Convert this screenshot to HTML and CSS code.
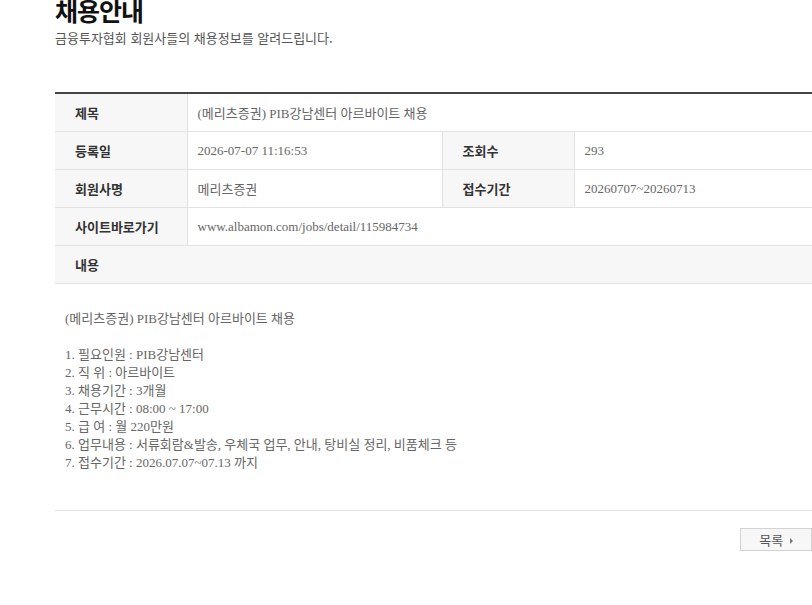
FILE: index.html
```html
<!DOCTYPE html>
<html lang="ko">
	<head>
		<meta charset="UTF-8" />
		<meta name="viewport" content="width=device-width, initial-scale=1.0" />
		<title>채용안내</title>
		<link rel="stylesheet" href="styles.css">
	</head>
	<body>
		<div class="wrap">
			<div class="page-head">
				<h2 class="page-title">채용안내</h2>
				<p class="page-desc">금융투자협회 회원사들의 채용정보를 알려드립니다.</p>
			</div>

			<table class="view-table">
				<colgroup>
					<col style="width: 132px" />
					<col style="width: 255px" />
					<col style="width: 132px" />
					<col />
				</colgroup>
				<tr>
					<th>제목</th>
					<td colspan="3">(메리츠증권) PIB강남센터 아르바이트 채용</td>
				</tr>
				<tr>
					<th>등록일</th>
					<td>2026-07-07 11:16:53</td>
					<th class="bl">조회수</th>
					<td>293</td>
				</tr>
				<tr>
					<th>회원사명</th>
					<td>메리츠증권</td>
					<th class="bl">접수기간</th>
					<td>20260707~20260713</td>
				</tr>
				<tr>
					<th>사이트바로가기</th>
					<td colspan="3">www.albamon.com/jobs/detail/115984734</td>
				</tr>
				<tr>
					<th colspan="4" class="full">내용</th>
				</tr>
			</table>

			<div class="view-content">
				<p>(메리츠증권) PIB강남센터 아르바이트 채용</p>
				<p>&nbsp;</p>
				<p>1. 필요인원 : PIB강남센터</p>
				<p>2. 직 위 : 아르바이트</p>
				<p>3. 채용기간 : 3개월</p>
				<p>4. 근무시간 : 08:00 ~ 17:00</p>
				<p>5. 급 여 : 월 220만원</p>
				<p>6. 업무내용 : 서류회람&amp;발송, 우체국 업무, 안내, 탕비실 정리, 비품체크 등</p>
				<p>7. 접수기간 : 2026.07.07~07.13 까지</p>
			</div>

			<div class="btn-area">
				<a href="#" class="btn-list">목록 <span class="arrow"></span></a>
			</div>
		</div>
	</body>
</html>
```

FILE: styles.css
```css
html,
body {
	margin: 0;
	padding: 0;
	overflow: hidden;
	background: #fff;
}

body {
	font-family: "Noto Sans CJK KR", "Noto Sans", sans-serif;
	color: #666;
}

.wrap {
	padding-left: 55px;
}

.page-head {
	margin-top: -6px;
}

.page-title {
	margin: 0;
	font-size: 25px;
	line-height: 32px;
	font-weight: bold;
	color: #111;
	letter-spacing: -1px;
}

.page-desc {
	margin: 3px 0 0 0;
	font-size: 13px;
	line-height: 18px;
	color: #555;
}

.view-table {
	width: 100%;
	margin-top: 45px;
	border-collapse: collapse;
	table-layout: fixed;
	border-top: 2px solid #444;
}

.view-table th,
.view-table td {
	height: 37px;
	padding: 0;
	border-bottom: 1px solid #e2e2e2;
	font-size: 13px;
	text-align: left;
	vertical-align: middle;
}

.view-table th {
	padding-left: 20px;
	background: #f7f7f7;
	color: #333;
	font-weight: bold;
	border-right: 1px solid #e2e2e2;
}

.view-table th.bl {
	border-left: 1px solid #e2e2e2;
}

.view-table th.full {
	border-right: 0;
}

.view-table td {
	padding-left: 10px;
	font-family: "Liberation Serif", "Noto Sans CJK KR", serif;
	color: #666;
}

.view-content {
	padding: 26px 10px 38px 10px;
	border-bottom: 1px solid #e2e2e2;
	font-family: "Liberation Serif", "Noto Sans CJK KR", serif;
	font-size: 13px;
	line-height: 18px;
	color: #666;
}

.view-content p {
	margin: 0;
}

.btn-area {
	margin-top: 15px;
	text-align: right;
}

.btn-list {
	display: inline-block;
	box-sizing: border-box;
	width: 72px;
	height: 23px;
	line-height: 21px;
	border: 1px solid #d2d2d2;
	background: #f7f7f7;
	color: #555;
	font-size: 13px;
	text-align: center;
	text-decoration: none;
}

.btn-list .arrow {
	display: inline-block;
	width: 0;
	height: 0;
	margin-left: 3px;
	border-top: 3px solid transparent;
	border-bottom: 3px solid transparent;
	border-left: 3px solid #777;
	vertical-align: 1px;
}
```
